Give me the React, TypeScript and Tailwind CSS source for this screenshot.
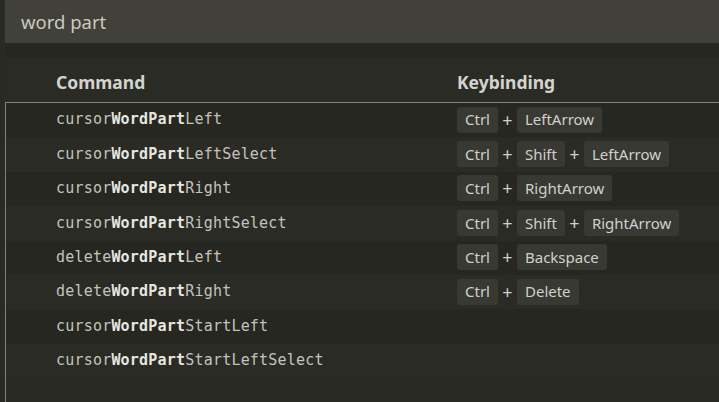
import React from "react";

type Row = { pre: string; post: string; keys: string[] };

const rows: Row[] = [
  { pre: "cursor", post: "Left", keys: ["Ctrl", "LeftArrow"] },
  { pre: "cursor", post: "LeftSelect", keys: ["Ctrl", "Shift", "LeftArrow"] },
  { pre: "cursor", post: "Right", keys: ["Ctrl", "RightArrow"] },
  { pre: "cursor", post: "RightSelect", keys: ["Ctrl", "Shift", "RightArrow"] },
  { pre: "delete", post: "Left", keys: ["Ctrl", "Backspace"] },
  { pre: "delete", post: "Right", keys: ["Ctrl", "Delete"] },
  { pre: "cursor", post: "StartLeft", keys: [] },
  { pre: "cursor", post: "StartLeftSelect", keys: [] },
];

const ui = { fontFamily: '"Noto Sans", "Open Sans", sans-serif' };
const mono = { fontFamily: '"DejaVu Sans Mono", "Liberation Mono", monospace' };

export default function App() {
  return (
    <div className="w-[719px] h-[402px] bg-[#2a2a25] flex overflow-hidden">
      <div className="w-[5px] shrink-0" />
      <div className="flex-1 flex flex-col">
        <div
          className="h-[43px] shrink-0 bg-[#414139] flex items-center pl-[16px] text-[18.5px] text-[#c9c9c2]"
          style={ui}
        >
          word part
        </div>
        <div className="h-[14px] shrink-0 bg-[#272722]" />
        <div
          className="h-[45px] shrink-0 bg-[#2b2b26] grid grid-cols-[401px_1fr] pl-[51px] items-center pt-[5px] text-[17.5px] font-bold text-[#d4d4cf]"
          style={ui}
        >
          <div>Command</div>
          <div>Keybinding</div>
        </div>
        <div className="flex-1 border-t border-l border-[#858270] flex flex-col">
          {rows.map((r, i) => (
            <div
              key={i}
              className={`h-[34.4px] shrink-0 grid grid-cols-[401px_1fr] pl-[50px] items-center ${
                i % 2 === 0 ? "bg-[#272722]" : "bg-[#2b2b26]"
              }`}
            >
              <div className="text-[15px] text-[#c3c3bc] tracking-[0.2px] -mt-[1px]" style={mono}>
                {r.pre}
                <span className="font-bold text-[#e6e6e0]">WordPart</span>
                {r.post}
              </div>
              <div className="flex items-center text-[15px] text-[#d0d0ca] -mt-[1px]" style={ui}>
                {r.keys.map((k, j) => (
                  <React.Fragment key={j}>
                    {j > 0 && <span className="w-[19px] text-center text-[18px] leading-none">+</span>}
                    <span className="h-[26px] px-[8px] flex items-center rounded-[3px] bg-[#393934]">
                      {k}
                    </span>
                  </React.Fragment>
                ))}
              </div>
            </div>
          ))}
        </div>
      </div>
    </div>
  );
}
